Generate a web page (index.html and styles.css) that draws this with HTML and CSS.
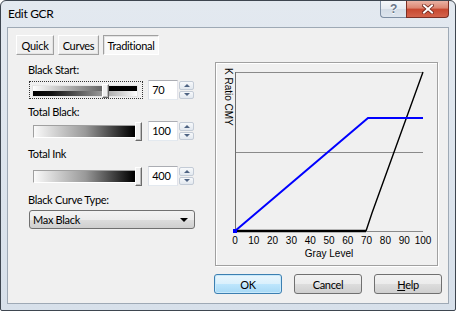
FILE: index.html
```html
<!DOCTYPE html>
<html>
<head>
  <meta charset="UTF-8">
  <meta name="viewport" content="width=device-width, initial-scale=1.0">
  <link rel="stylesheet" href="styles.css">
</head>
<body>
<div class="window">
  <div class="titlebar">
    <span class="title">Edit GCR</span>
    <div class="caption">
      <div class="cap help">?</div>
      <div class="cap close">
        <svg width="12" height="10" viewBox="0 0 12 10">
          <path d="M2 1.5 L10 8.5 M10 1.5 L2 8.5" stroke="#6d2218" stroke-width="3.6" stroke-linecap="square"/>
          <path d="M2 1.5 L10 8.5 M10 1.5 L2 8.5" stroke="#fff" stroke-width="2" stroke-linecap="square"/>
        </svg>
      </div>
    </div>
  </div>

  <div class="client">
    <div class="tabs">
      <button class="tab quick">Quick</button>
      <button class="tab curves">Curves</button>
      <button class="tab trad active">Traditional</button>
    </div>

    <div class="main">
      <div class="controls">
        <div class="lbl">Black Start:</div>
        <div class="row first">
          <div class="slider focus">
            <div class="band top"></div>
            <div class="band bottom"></div>
            <div class="thumb mid"></div>
          </div>
          <div class="num">70</div>
          <div class="spin"><span class="up"></span><span class="down"></span></div>
        </div>

        <div class="lbl lbl2">Total Black:</div>
        <div class="row second">
          <div class="slider">
            <div class="track"></div>
            <div class="thumb end"></div>
          </div>
          <div class="num">100</div>
          <div class="spin"><span class="up"></span><span class="down"></span></div>
        </div>

        <div class="lbl lbl3">Total Ink</div>
        <div class="row third">
          <div class="slider">
            <div class="track"></div>
            <div class="thumb end"></div>
          </div>
          <div class="num">400</div>
          <div class="spin"><span class="up"></span><span class="down"></span></div>
        </div>

        <div class="lbl lbl4">Black Curve Type:</div>
        <div class="combo">
          <span>Max Black</span>
          <span class="caret"></span>
        </div>
      </div>

      <div class="chart">
        <svg width="221" height="202" viewBox="0 0 221 202">
          <!-- grid -->
          <path d="M19 9.5 H207 M19 89.5 H207 M19 168.5 H207" stroke="#8a8a8a" stroke-width="1" fill="none"/>
          <path d="M19.5 9 V168" stroke="#6e6e6e" stroke-width="1"/>
          <!-- black curve -->
          <path d="M19 168 H150" stroke="#000" stroke-width="2.4"/>
          <path d="M150 168 L156 150 L207 9" stroke="#000" stroke-width="1.4" fill="none"/>
          <!-- cmy curve -->
          <path d="M19 168 L152 55 H207" stroke="#0000ff" stroke-width="2" fill="none"/>
          <rect x="17" y="166" width="4" height="4" fill="#0000ff"/>

          <g class="ticks" text-anchor="middle">
            <text x="19" y="181">0</text>
            <text x="37.8" y="181">10</text>
            <text x="56.6" y="181">20</text>
            <text x="75.4" y="181">30</text>
            <text x="94.2" y="181">40</text>
            <text x="113" y="181">50</text>
            <text x="131.8" y="181">60</text>
            <text x="150.6" y="181">70</text>
            <text x="169.4" y="181">80</text>
            <text x="188.2" y="181">90</text>
            <text x="207" y="181">100</text>
          </g>
          <text class="axis" x="113" y="194" text-anchor="middle">Gray Level</text>
          <text class="axis" transform="translate(9,5) rotate(90)">K Ratio CMY</text>
        </svg>
      </div>
    </div>

    <div class="actions">
      <button class="btn default">OK</button>
      <button class="btn">Cancel</button>
      <button class="btn"><u>H</u>elp</button>
    </div>
  </div>
</div>
</body>
</html>
```

FILE: styles.css
```css
* {
  margin: 0;
  padding: 0;
  box-sizing: border-box;
}

body {
  background: #fff;
  font-family: Lato, "Liberation Sans", sans-serif;
  font-size: 11px;
  letter-spacing: -0.3px;
  color: #000;
}

.window {
  width: 456px;
  height: 311px;
  border: 1px solid #3e4650;
  border-radius: 6px 6px 2px 2px;
  background: linear-gradient(#e3e9f0, #d7e0ea);
  display: flex;
  flex-direction: column;
  overflow: hidden;
}

.titlebar {
  height: 26px;
  display: flex;
  justify-content: space-between;
  align-items: flex-start;
}

.title {
  padding: 6px 0 0 7px;
  font-size: 12px;
  line-height: 14px;
}

.caption {
  display: flex;
  margin-right: 6px;
}

.cap {
  height: 17px;
  border: 1px solid #7d8ea3;
  border-top: none;
  display: flex;
  align-items: center;
  justify-content: center;
}

.help {
  width: 26px;
  border-right: none;
  border-radius: 0 0 0 4px;
  background: linear-gradient(#f4f7fa, #e4eaf1 50%, #d3dce6 51%, #dde5ee);
  font-family: "Liberation Sans", sans-serif;
  font-weight: bold;
  font-size: 12px;
  color: #6a768a;
  text-shadow: 0 1px 0 #fff;
}

.close {
  width: 43px;
  border-color: #7b2f24;
  border-radius: 0 0 4px 0;
  background: linear-gradient(#eab2a4, #dc8570 45%, #c7472f 50%, #d3634c);
}

.client {
  flex: 1;
  margin: 0 6px 6px;
  border: 1px solid #9ea9b5;
  background: #f0f0f0;
  display: flex;
  flex-direction: column;
}

/* tab buttons */
.tabs {
  display: flex;
  gap: 4px;
  padding: 7px 0 0 8px;
}

.tab {
  height: 20px;
  font: inherit;
  letter-spacing: inherit;
  color: #000;
  background: #f0f0f0;
  border: 1px solid;
  border-color: #fff #a0a0a0 #a0a0a0 #fff;
  box-shadow: inset -1px -1px 0 #e3e3e3;
}

.quick { width: 38px; }
.curves { width: 41px; }
.trad { width: 56px; }

.tab.active {
  border-color: #a0a0a0 #fff #fff #a0a0a0;
  background: #f9f9f9;
  box-shadow: inset 1px 1px 0 #e3e3e3;
}

.main {
  display: flex;
  gap: 21px;
  padding: 7px 0 0 20px;
}

.controls {
  width: 166px;
  display: flex;
  flex-direction: column;
  padding-top: 1px;
}

.lbl {
  line-height: 14px;
}

.lbl2 { margin-top: 5px; }
.lbl3 { margin-top: 6px; }
.lbl4 { margin-top: 7px; }

.row {
  height: 20px;
  display: flex;
  align-items: center;
  margin-top: 2px;
}

.row.first { margin-top: 3px; }
.row.third { margin-top: 5px; }

.slider {
  position: relative;
  width: 115px;
  height: 18px;
  margin: 0 5px 0 1px;
}

.slider.focus {
  border: 1px dotted #333;
}

.band {
  position: absolute;
  left: 2px;
  width: 106px;
  height: 6px;
}

.band.top {
  top: 3px;
  background: linear-gradient(to right, #fff, #666 66%, #000 66%, #000);
  border: 1px solid #e6e6e6;
  border-bottom: none;
}

.band.bottom {
  top: 9px;
  background: linear-gradient(to right, #000, #111 18%, #999 66%, #fff);
  border: 1px solid #e6e6e6;
  border-top: none;
}

.track {
  position: absolute;
  left: 4px;
  top: 3px;
  width: 105px;
  height: 13px;
  border: 1px solid;
  border-color: #a0a0a0 #fff #fff #a0a0a0;
  background: linear-gradient(to right, #fafafa, #999 50%, #000 97%);
}

.thumb {
  position: absolute;
  background: #f0f0f0;
  border: 1px solid;
  border-color: #fff #6b6b6b #6b6b6b #fff;
  box-shadow: inset -1px -1px 0 #bdbdbd;
}

.thumb.mid {
  left: 72px;
  top: 2px;
  width: 7px;
  height: 14px;
}

.thumb.end {
  left: 106px;
  top: 0;
  width: 7px;
  height: 19px;
}

.num {
  width: 30px;
  height: 20px;
  background: #fff;
  border: 1px solid;
  border-color: #abadb3 #e2e3ea #e3e9ef #dbdfe6;
  padding-left: 3px;
  line-height: 18px;
  font-size: 11px;
}

.spin {
  width: 15px;
  height: 20px;
  margin-left: 1px;
  display: flex;
  flex-direction: column;
  gap: 1px;
  padding: 1px 0;
}

.spin span {
  flex: 1;
  border: 1px solid #c3cbd6;
  border-radius: 2px;
  background: linear-gradient(#f7f9fb, #e2e8ef);
  display: flex;
  align-items: center;
  justify-content: center;
}

.spin .up::after {
  content: "";
  border-left: 3px solid transparent;
  border-right: 3px solid transparent;
  border-bottom: 3px solid #4e6382;
}

.spin .down::after {
  content: "";
  border-left: 3px solid transparent;
  border-right: 3px solid transparent;
  border-top: 3px solid #4e6382;
}

.combo {
  width: 166px;
  height: 19px;
  margin: 3px 0 0 1px;
  border: 1px solid #707070;
  border-radius: 3px;
  background: linear-gradient(#f2f2f2, #ebebeb 50%, #dddddd 50%, #cfcfcf);
  display: flex;
  align-items: center;
  justify-content: space-between;
  padding: 0 6px 0 3px;
}

.caret {
  border-left: 4px solid transparent;
  border-right: 4px solid transparent;
  border-top: 4px solid #000;
}

/* graph */
.chart {
  width: 223px;
  height: 204px;
  border: 1px solid #a0a0a0;
  box-shadow: inset 1px 1px 0 #fff, 1px 1px 0 #fff;
}

.chart svg {
  display: block;
}

.chart text {
  font-family: "Liberation Sans", sans-serif;
  font-size: 10px;
  letter-spacing: 0;
  fill: #000;
}

.actions {
  display: flex;
  justify-content: flex-end;
  gap: 12px;
  padding: 8px 6px 0 0;
}

.btn {
  width: 68px;
  height: 20px;
  font: inherit;
  letter-spacing: inherit;
  color: #000;
  border: 1px solid #707070;
  border-radius: 3px;
  background: linear-gradient(#f2f2f2, #ebebeb 50%, #dddddd 50%, #cfcfcf);
}

.btn.default {
  border-color: #3c7fb1;
  background: linear-gradient(#eaf6fd, #d9f0fc 50%, #bee6fd 50%, #a7d9f5);
  box-shadow: inset 0 0 0 1px #c8e9fb;
}
```
